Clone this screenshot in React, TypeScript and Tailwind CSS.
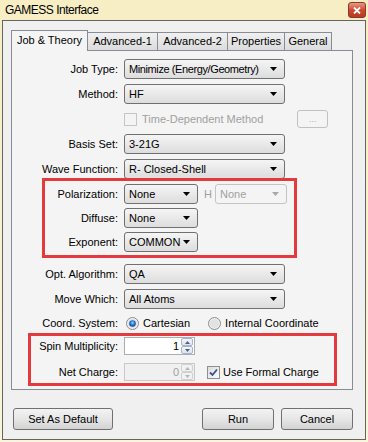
import React from 'react';

const Arrow = ({ color = '#000' }: { color?: string }) => (
  <svg width="7" height="4" viewBox="0 0 7 4" className="shrink-0">
    <path d="M0 0H7L3.5 4Z" fill={color} />
  </svg>
);

function Combo({
  text,
  wClass,
  disabled,
  textClass = '',
}: {
  text: string;
  wClass: string;
  disabled?: boolean;
  textClass?: string;
}) {
  return (
    <div
      className={`${wClass} flex h-[20px] items-center justify-between rounded-[3px] border pl-[4px] pr-[7px] ${
        disabled
          ? 'border-[#c4c4c4] bg-[#f4f4f4] text-[#a0a0a0]'
          : 'border-[#707070] bg-gradient-to-b from-[#f5f5f5] to-[#dddddd] text-black'
      }`}
    >
      <span className={`leading-none ${textClass}`}>{text}</span>
      <Arrow color={disabled ? '#a8a8a8' : '#000'} />
    </div>
  );
}

function Row({ label, children, className = '' }: { label: string; children: React.ReactNode; className?: string }) {
  return (
    <div className={`flex h-[20px] items-center ${className}`}>
      <div className="w-[106px] text-right leading-none">{label}</div>
      <div className="ml-[6px] flex items-center">{children}</div>
    </div>
  );
}

function SpinBtn({ up, disabled }: { up?: boolean; disabled?: boolean }) {
  return (
    <div
      className={`flex h-[8px] w-[12px] items-center justify-center rounded-[2px] border ${
        disabled ? 'border-[#d0d0d0] bg-[#f2f2f2]' : 'border-[#a7b3c8] bg-gradient-to-b from-[#f4f6fa] to-[#dde3ed]'
      }`}
    >
      <svg width="5" height="3" viewBox="0 0 5 3">
        <path d={up ? 'M0 3H5L2.5 0Z' : 'M0 0H5L2.5 3Z'} fill={disabled ? '#b5b5b5' : '#4d6185'} />
      </svg>
    </div>
  );
}

function Spin({ value, disabled }: { value: string; disabled?: boolean }) {
  return (
    <div
      className={`flex h-[18px] w-[71px] items-center border ${
        disabled ? 'border-[#c8c8c8] bg-[#f0f0f0] text-[#a0a0a0]' : 'border-[#abadb3] bg-white text-black'
      }`}
    >
      <div className="flex-1 pr-[2px] text-right leading-none">{value}</div>
      <div className="flex w-[13px] flex-col gap-0 pr-px">
        <SpinBtn up disabled={disabled} />
        <SpinBtn disabled={disabled} />
      </div>
    </div>
  );
}

function Radio({ checked }: { checked?: boolean }) {
  return (
    <svg width="13" height="13" viewBox="0 0 13 13" className="shrink-0">
      <defs>
        <radialGradient id="rg" cx="50%" cy="40%" r="60%">
          <stop offset="0%" stopColor="#8fd3ff" />
          <stop offset="60%" stopColor="#1c6fd0" />
          <stop offset="100%" stopColor="#123e83" />
        </radialGradient>
      </defs>
      <circle cx="6.5" cy="6.5" r="6" fill="#f1f1f1" stroke="#8b8b8b" />
      <circle cx="6.5" cy="6.5" r="4.5" fill="#e2e2e2" />
      {checked && <circle cx="6.5" cy="6.5" r="3.3" fill="url(#rg)" />}
    </svg>
  );
}

function Check({ checked, disabled }: { checked?: boolean; disabled?: boolean }) {
  return (
    <div
      className={`flex h-[13px] w-[13px] shrink-0 items-center justify-center border ${
        disabled ? 'border-[#c5c5c5] bg-[#f4f4f4]' : 'border-[#8e8f8f] bg-gradient-to-br from-[#dcdcdc] to-[#fbfbfb]'
      }`}
    >
      {checked && (
        <svg width="9" height="9" viewBox="0 0 9 9">
          <path d="M1 4.5L3.5 7L8 1.5" stroke="#3a4f8c" strokeWidth="1.8" fill="none" />
        </svg>
      )}
    </div>
  );
}

function Button({ label, wClass }: { label: string; wClass: string }) {
  return (
    <div
      className={`${wClass} flex h-[22px] items-center justify-center rounded-[3px] border border-[#707070] bg-gradient-to-b from-[#f3f3f3] via-[#e6e6e6] to-[#d3d3d3] leading-none`}
    >
      {label}
    </div>
  );
}

function Tab({ label, wClass, selected }: { label: string; wClass: string; selected?: boolean }) {
  if (selected) {
    return (
      <div
        className={`${wClass} relative z-10 -mb-px flex h-[21px] items-center justify-center border-x border-t border-[#898c95] bg-[#f4f4f4] pb-[2px] leading-none`}
      >
        {label}
      </div>
    );
  }
  return (
    <div
      className={`${wClass} -ml-px flex h-[18px] items-center justify-center border-x border-t border-[#898c95] bg-gradient-to-b from-[#f0f0f0] to-[#dcdcdc] leading-none`}
    >
      {label}
    </div>
  );
}

export default function App() {
  return (
    <div
      className="h-[442px] w-[368px] overflow-hidden bg-gradient-to-b from-[#f7eec4] to-[#fbf4d8] text-[11px] text-black"
      style={{ fontFamily: '"Liberation Sans", Arial, sans-serif' }}
    >
      {/* title bar */}
      <div className="flex h-[20px] items-center justify-between pl-[5px] pr-[2px]">
        <span className="text-[12px] leading-none tracking-[-0.5px]">GAMESS Interface</span>
        <div className="flex h-[16px] w-[18px] items-center justify-center rounded-[3px] border border-[#8c3a2c] bg-gradient-to-b from-[#e49a86] via-[#cc4a30] to-[#b8391f]">
          <svg width="8" height="7" viewBox="0 0 8 7">
            <path d="M1 0.5L7 6.5M7 0.5L1 6.5" stroke="#fff" strokeWidth="1.8" />
          </svg>
        </div>
      </div>

      {/* client area */}
      <div className="mx-[2px] border border-[#646464] bg-[#f0f0f0] pl-[8px] pr-[12px] pt-[9px] pb-[9px]">
        {/* tabs */}
        <div className="flex items-end">
          <Tab label="Job & Theory" wClass="w-[77px]" selected />
          <Tab label="Advanced-1" wClass="w-[71px]" />
          <Tab label="Advanced-2" wClass="w-[71px]" />
          <Tab label="Properties" wClass="w-[58px]" />
          <Tab label="General" wClass="w-[48px]" />
        </div>

        {/* tab panel */}
        <div className="relative h-[340px] border border-[#898c95] bg-[#f4f4f4] pt-[8px]">
          <div className="flex flex-col">
            <Row label="Job Type:">
              <Combo text="Minimize (Energy/Geometry)" wClass="w-[161px]" textClass="tracking-[-0.4px]" />
            </Row>
            <Row label="Method:" className="mt-[5px]">
              <Combo text="HF" wClass="w-[161px]" />
            </Row>
            <div className="mt-[5px] flex h-[20px] items-center pl-[112px] text-[#a0a0a0]">
              <Check disabled />
              <span className="ml-[5px] leading-none">Time-Dependent Method</span>
              <div className="ml-[34px] flex h-[18px] w-[31px] items-center justify-center rounded-[3px] border border-[#c0c0c0] bg-[#f4f4f4] text-[9px] leading-none text-[#b0b0b0]">
                ...
              </div>
            </div>
            <Row label="Basis Set:" className="mt-[5px]">
              <Combo text="3-21G" wClass="w-[161px]" />
            </Row>
            <Row label="Wave Function:" className="mt-[5px]">
              <Combo text="R- Closed-Shell" wClass="w-[161px]" />
            </Row>
            <Row label="Polarization:" className="mt-[5px]">
              <Combo text="None" wClass="w-[74px]" />
              <span className="ml-[6px] mr-[3px] leading-none text-[#a0a0a0]">H</span>
              <Combo text="None" wClass="w-[72px]" disabled />
            </Row>
            <Row label="Diffuse:" className="mt-[4px]">
              <Combo text="None" wClass="w-[74px]" />
            </Row>
            <Row label="Exponent:" className="mt-[4px]">
              <Combo text="COMMON" wClass="w-[74px]" />
            </Row>
            <Row label="Opt. Algorithm:" className="mt-[12px]">
              <Combo text="QA" wClass="w-[161px]" />
            </Row>
            <Row label="Move Which:" className="mt-[5px]">
              <Combo text="All Atoms" wClass="w-[161px]" />
            </Row>
            <Row label="Coord. System:" className="mt-[4px]">
              <div className="flex items-center pl-[2px]">
                <Radio checked />
                <span className="ml-[4px] leading-none">Cartesian</span>
                <div className="ml-[18px]">
                  <Radio />
                </div>
                <span className="ml-[4px] leading-none">Internal Coordinate</span>
              </div>
            </Row>
            <Row label="Spin Multiplicity:" className="mt-[3px]">
              <Spin value="1" />
            </Row>
            <Row label="Net Charge:" className="mt-[6px]">
              <Spin value="0" disabled />
              <div className="ml-[12px] flex items-center">
                <Check checked />
                <span className="ml-[3px] leading-none">Use Formal Charge</span>
              </div>
            </Row>
          </div>

          {/* annotation boxes */}
          <div className="pointer-events-none absolute left-[30px] top-[127px] h-[80px] w-[255px] border-[3px] border-[#e23a3d]" />
          <div className="pointer-events-none absolute left-[16px] top-[282px] h-[53px] w-[309px] border-[3px] border-[#e23a3d]" />
        </div>

        {/* bottom buttons */}
        <div className="mt-[18px] flex items-center pl-[2px]">
          <Button label="Set As Default" wClass="w-[100px]" />
          <div className="ml-auto flex gap-[7px]">
            <Button label="Run" wClass="w-[72px]" />
            <Button label="Cancel" wClass="w-[72px]" />
          </div>
        </div>
      </div>
    </div>
  );
}
